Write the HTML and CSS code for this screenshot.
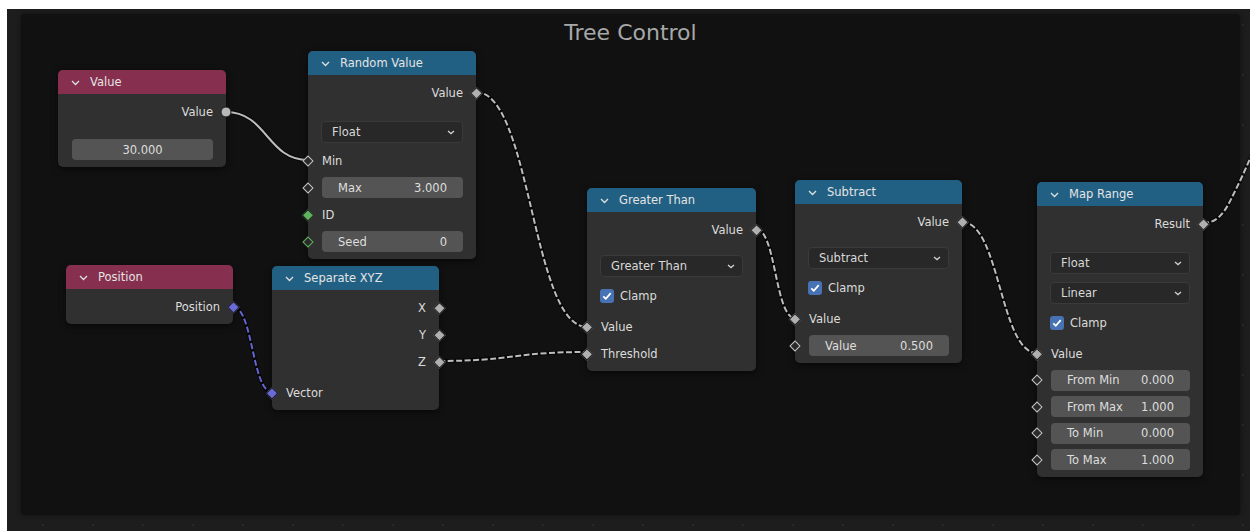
FILE: index.html
```html
<!DOCTYPE html>
<html>
<head>
<meta charset="utf-8">
<title>Tree Control</title>
<link rel="stylesheet" href="styles.css">
</head>
<body>
<div class="editor">

  <div class="frame">
    <div class="frame-title">Tree Control</div>
  </div>

  <!-- links are drawn in page coordinates -->
  <svg class="links" width="1243" height="522" viewBox="7 9 1243 522">
    <g class="edge">
      <path d="M226 112 C267 112 267 160 308 160"/>
      <path d="M476 92 C531 92 532 327 587 327"/>
      <path d="M233 307 C253 307 252 392 272 392"/>
      <path d="M439 361 C513 361 513 352 587 352"/>
      <path d="M756 229 C776 229 775 318 795 318"/>
      <path d="M962 222 C1000 222 1000 353 1037 353"/>
      <path d="M1203 223 C1222 223 1228 205 1238 185 S1262 130 1275 100"/>
    </g>
    <path class="wire" d="M226 112 C267 112 267 160 308 160"/>
    <path class="wire dash" d="M476 92 C531 92 532 327 587 327"/>
    <path class="wire dash vec" d="M233 307 C253 307 252 392 272 392"/>
    <path class="wire dash" d="M439 361 C513 361 513 352 587 352"/>
    <path class="wire dash" d="M756 229 C776 229 775 318 795 318"/>
    <path class="wire dash" d="M962 222 C1000 222 1000 353 1037 353"/>
    <path class="wire dash" d="M1203 223 C1222 223 1228 205 1238 185 S1262 130 1275 100"/>
  </svg>

  <!-- Value -->
  <div class="node n-value">
    <div class="head input"><svg class="chev" viewBox="0 0 9 6"><path d="M1 1l3.5 3.5L8 1"/></svg>Value</div>
    <div class="body">
      <div class="row out"><span>Value</span><i class="s circle"></i></div>
      <div class="gap lg"></div>
      <div class="row"><div class="field mid">30.000</div></div>
    </div>
  </div>

  <!-- Random Value -->
  <div class="node n-random">
    <div class="head conv"><svg class="chev" viewBox="0 0 9 6"><path d="M1 1l3.5 3.5L8 1"/></svg>Random Value</div>
    <div class="body">
      <div class="row out"><span>Value</span><i class="s dia"></i></div>
      <div class="gap lg"></div>
      <div class="prop"><div class="drop">Float<svg viewBox="0 0 8 5"><path d="M1 1l3 2.6L7 1"/></svg></div></div>
      <div class="row"><i class="s hollow"></i><span>Min</span></div>
      <div class="row"><i class="s hollow"></i><div class="field"><span>Max</span><span>3.000</span></div></div>
      <div class="row"><i class="s dia green"></i><span>ID</span></div>
      <div class="row"><i class="s hollow green"></i><div class="field"><span>Seed</span><span>0</span></div></div>
    </div>
  </div>

  <!-- Position -->
  <div class="node n-position">
    <div class="head input"><svg class="chev" viewBox="0 0 9 6"><path d="M1 1l3.5 3.5L8 1"/></svg>Position</div>
    <div class="body">
      <div class="row out"><span>Position</span><i class="s dia vec"></i></div>
    </div>
  </div>

  <!-- Separate XYZ -->
  <div class="node n-separate">
    <div class="head conv"><svg class="chev" viewBox="0 0 9 6"><path d="M1 1l3.5 3.5L8 1"/></svg>Separate XYZ</div>
    <div class="body">
      <div class="row out"><span>X</span><i class="s dia"></i></div>
      <div class="row out"><span>Y</span><i class="s dia"></i></div>
      <div class="row out"><span>Z</span><i class="s dia"></i></div>
      <div class="gap sm"></div>
      <div class="row"><i class="s dia vec"></i><span>Vector</span></div>
    </div>
  </div>

  <!-- Greater Than -->
  <div class="node n-greater">
    <div class="head conv"><svg class="chev" viewBox="0 0 9 6"><path d="M1 1l3.5 3.5L8 1"/></svg>Greater Than</div>
    <div class="body">
      <div class="row out"><span>Value</span><i class="s dia"></i></div>
      <div class="gap"></div>
      <div class="prop"><div class="drop">Greater Than<svg viewBox="0 0 8 5"><path d="M1 1l3 2.6L7 1"/></svg></div></div>
      <div class="prop chk"><b class="box"><svg viewBox="0 0 14 14"><path d="M3.3 7.3l2.5 2.5 4.9-5.6"/></svg></b><span>Clamp</span></div>
      <div class="row"><i class="s dia"></i><span>Value</span></div>
      <div class="row"><i class="s dia"></i><span>Threshold</span></div>
    </div>
  </div>

  <!-- Subtract -->
  <div class="node n-subtract">
    <div class="head conv"><svg class="chev" viewBox="0 0 9 6"><path d="M1 1l3.5 3.5L8 1"/></svg>Subtract</div>
    <div class="body">
      <div class="row out"><span>Value</span><i class="s dia"></i></div>
      <div class="gap"></div>
      <div class="prop"><div class="drop">Subtract<svg viewBox="0 0 8 5"><path d="M1 1l3 2.6L7 1"/></svg></div></div>
      <div class="prop chk"><b class="box"><svg viewBox="0 0 14 14"><path d="M3.3 7.3l2.5 2.5 4.9-5.6"/></svg></b><span>Clamp</span></div>
      <div class="row"><i class="s dia"></i><span>Value</span></div>
      <div class="row"><i class="s hollow"></i><div class="field"><span>Value</span><span>0.500</span></div></div>
    </div>
  </div>

  <!-- Map Range -->
  <div class="node n-map">
    <div class="head conv"><svg class="chev" viewBox="0 0 9 6"><path d="M1 1l3.5 3.5L8 1"/></svg>Map Range</div>
    <div class="body">
      <div class="row out"><span>Result</span><i class="s dia"></i></div>
      <div class="gap lg"></div>
      <div class="prop"><div class="drop">Float<svg viewBox="0 0 8 5"><path d="M1 1l3 2.6L7 1"/></svg></div></div>
      <div class="prop"><div class="drop">Linear<svg viewBox="0 0 8 5"><path d="M1 1l3 2.6L7 1"/></svg></div></div>
      <div class="prop chk"><b class="box"><svg viewBox="0 0 14 14"><path d="M3.3 7.3l2.5 2.5 4.9-5.6"/></svg></b><span>Clamp</span></div>
      <div class="row"><i class="s dia"></i><span>Value</span></div>
      <div class="row tight"><i class="s hollow"></i><div class="field"><span>From Min</span><span>0.000</span></div></div>
      <div class="row tight"><i class="s hollow"></i><div class="field"><span>From Max</span><span>1.000</span></div></div>
      <div class="row tight"><i class="s hollow"></i><div class="field"><span>To Min</span><span>0.000</span></div></div>
      <div class="row tight"><i class="s hollow"></i><div class="field"><span>To Max</span><span>1.000</span></div></div>
    </div>
  </div>

</div>
</body>
</html>
```

FILE: styles.css
```css
body {
  margin: 0;
  background: #ffffff;
  font-family: "DejaVu Sans", sans-serif;
  font-size: 11.5px;
  color: #dcdcdc;
}

.editor {
  position: relative;
  margin: 9px 0 0 7px;
  width: 1243px;
  height: 522px;
  overflow: hidden;
  background-color: #1d1d1d;
  background-image: radial-gradient(circle, rgba(255,255,255,0.05) 1px, transparent 1.6px);
  background-size: 50px 50px;
  background-position: 11px -9px;
}

/* frame node */
.frame {
  position: absolute;
  left: 14px;
  top: 5px;
  width: 1219px;
  height: 501px;
  background: #111111;
  border-radius: 4px;
  box-shadow: 0 0 5px rgba(0,0,0,0.45);
}

.frame-title {
  text-align: center;
  font-size: 22px;
  line-height: 28px;
  padding-top: 5px;
  color: #a8a8a8;
}

/* links */
.links {
  position: absolute;
  left: 0;
  top: 0;
}

.edge path {
  fill: none;
  stroke: rgba(0,0,0,0.55);
  stroke-width: 4;
}

.wire {
  fill: none;
  stroke: #bdbdbd;
  stroke-width: 2;
}

.wire.dash {
  stroke-dasharray: 6 2.5;
}

.wire.vec {
  stroke: #6565d2;
}

/* nodes */
.node {
  position: absolute;
  width: 168px;
  background: #303030;
  border-radius: 5px;
  box-shadow: 0 2px 6px rgba(0,0,0,0.55);
}

.n-value    { left: 51px;   top: 61px; }
.n-random   { left: 301px;  top: 42px; }
.n-position { left: 59px;   top: 256px; width: 167px; }
.n-separate { left: 265px;  top: 257px; width: 167px; }
.n-greater  { left: 580px;  top: 179px; width: 169px; }
.n-subtract { left: 788px;  top: 171px; width: 167px; }
.n-map      { left: 1030px; top: 173px; width: 166px; }

.head {
  height: 24px;
  display: flex;
  align-items: center;
  padding-left: 13px;
  border-radius: 5px 5px 0 0;
  color: #e4e4e4;
}

.head.input { background: #862f4e; }
.head.conv  { background: #226083; }

.chev {
  width: 9px;
  height: 6px;
  margin-right: 10px;
  margin-top: 1px;
}

.chev path {
  fill: none;
  stroke: #e0e0e0;
  stroke-width: 1.3;
}

.body {
  padding: 4px 0 4px;
}

.row {
  position: relative;
  height: 27px;
  display: flex;
  align-items: center;
  padding: 0 13px 0 14px;
}

.row.tight { height: 26.5px; }

.row.out {
  justify-content: flex-end;
}

.gap     { height: 8px; }
.gap.lg  { height: 11px; }
.gap.sm  { height: 4px; }

.prop {
  height: 30px;
  display: flex;
  align-items: center;
  padding: 0 13px;
}

.prop.chk + .row { margin-top: 2px; }

/* sockets */
.s {
  position: absolute;
  top: 50%;
  left: 0;
  width: 8.5px;
  height: 8.5px;
  box-sizing: border-box;
  transform: translate(-50%, -50%) rotate(45deg);
  background: #b0b0b0;
  border: 1px solid #1c1c1c;
}

.row.out .s {
  left: auto;
  right: 0;
  transform: translate(50%, -50%) rotate(45deg);
}

.row.out .s.circle {
  width: 11px;
  height: 11px;
  border-radius: 50%;
  background: #b8b8b8;
  transform: translate(50%, -50%);
}

.s.hollow {
  width: 8px;
  height: 8px;
  background: #2a2a2a;
  border: 1.8px solid #c6c6c6;
}

.s.green { background: #5fb35f; }
.s.hollow.green { background: #2a2a2a; border-color: #5fb35f; }
.s.vec { background: #6a6ad8; }

/* widgets */
.field {
  flex: 1;
  height: 21px;
  display: flex;
  align-items: center;
  justify-content: space-between;
  padding: 0 16px;
  background: #545454;
  border-radius: 4px;
  color: #dedede;
}

.field.mid {
  justify-content: center;
}

.drop {
  flex: 1;
  height: 22px;
  box-sizing: border-box;
  display: flex;
  align-items: center;
  justify-content: space-between;
  padding: 0 7px 0 10px;
  background: #282828;
  border: 1px solid #3a3a3a;
  border-radius: 4px;
  color: #d8d8d8;
}

.drop svg {
  width: 8px;
  height: 5px;
}

.drop svg path {
  fill: none;
  stroke: #cfcfcf;
  stroke-width: 1.3;
}

.box {
  width: 14px;
  height: 14px;
  margin-right: 6px;
  border-radius: 3px;
  background: #4772b3;
  display: flex;
}

.box svg {
  width: 14px;
  height: 14px;
}

.box svg path {
  fill: none;
  stroke: #ffffff;
  stroke-width: 1.8;
}
```
